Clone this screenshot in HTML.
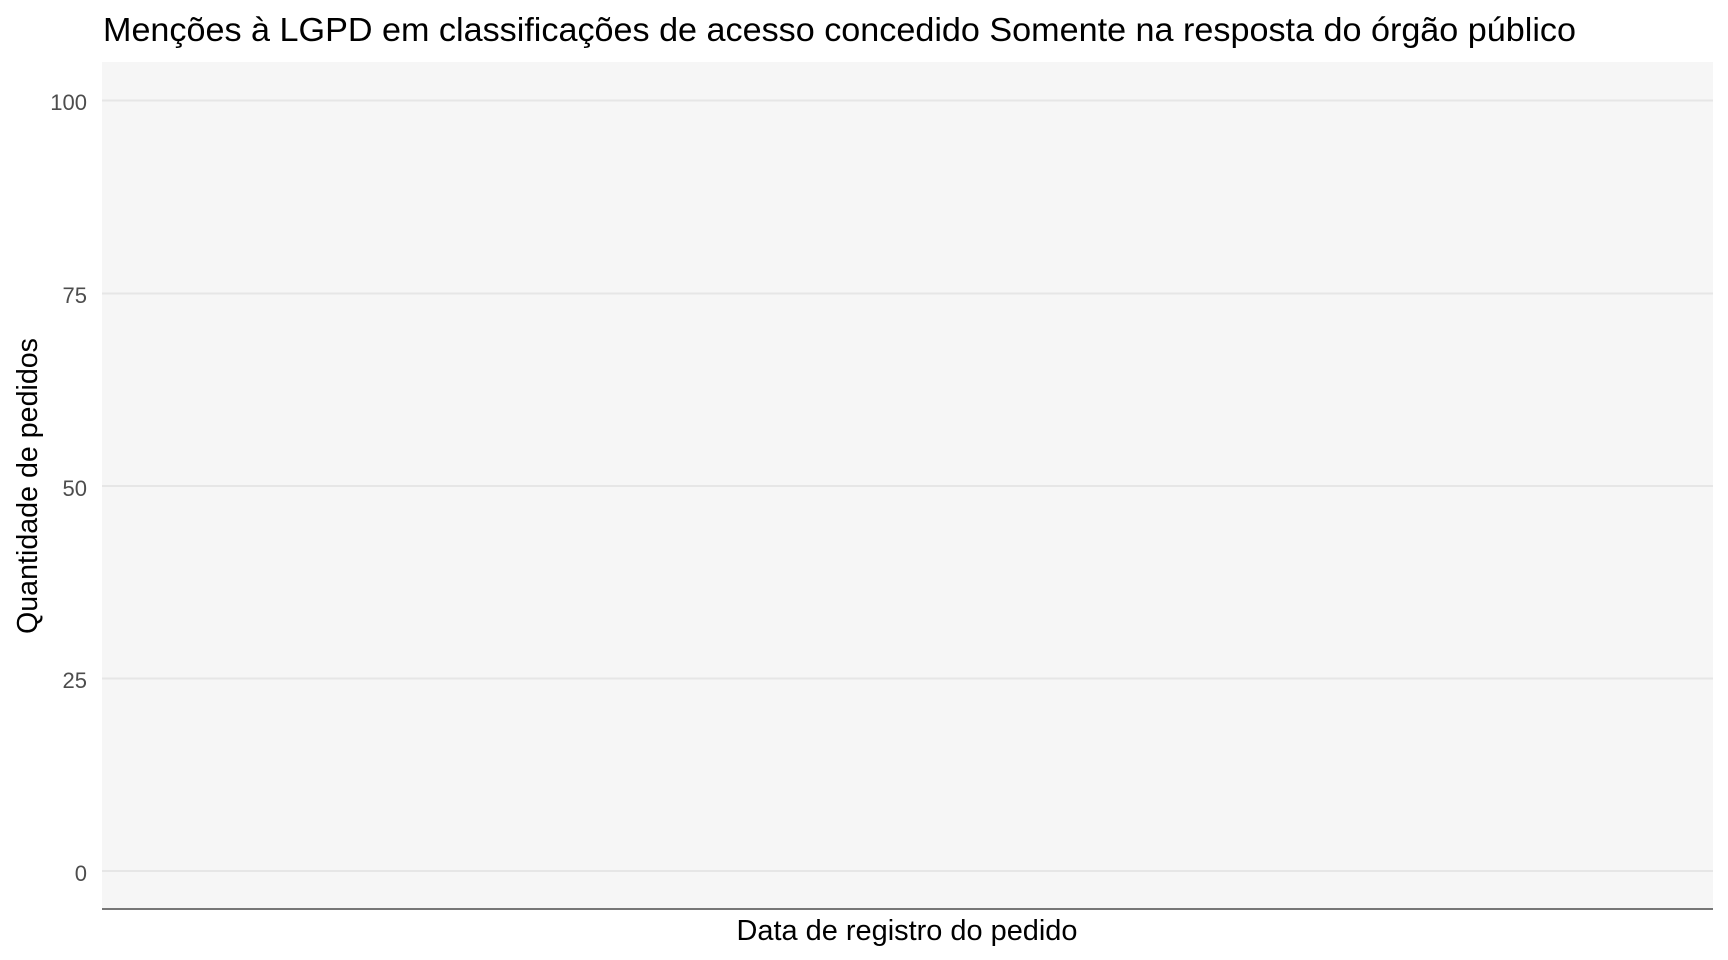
<!DOCTYPE html>
<html><head><meta charset="utf-8"><style>html,body{margin:0;padding:0;background:#fff}svg{display:block}</style></head>
<body>
<svg width="1728" height="960" xmlns="http://www.w3.org/2000/svg" font-family="Liberation Sans, Arial, sans-serif">
<rect x="0" y="0" width="1728" height="960" fill="#fff"/>
<rect x="102" y="62" width="1611" height="847" fill="#f6f6f6"/>
<g stroke="#e6e6e6" stroke-width="2">
<line x1="102" x2="1713" y1="100.5" y2="100.5"/>
<line x1="102" x2="1713" y1="293.5" y2="293.5"/>
<line x1="102" x2="1713" y1="486" y2="486"/>
<line x1="102" x2="1713" y1="678.5" y2="678.5"/>
<line x1="102" x2="1713" y1="871" y2="871"/>
</g>
<line x1="102" x2="1713" y1="909" y2="909" stroke="#777" stroke-width="2"/>
<g fill="#4d4d4d" font-size="22" text-anchor="end">
<text x="87" y="110">100</text>
<text x="87" y="303">75</text>
<text x="87" y="496">50</text>
<text x="87" y="688">25</text>
<text x="87" y="881">0</text>
</g>
<text x="103" y="41" font-size="33" fill="#000" textLength="1473" lengthAdjust="spacingAndGlyphs">Menções à LGPD em classificações de acesso concedido Somente na resposta do órgão público</text>
<text x="907" y="940" font-size="29" fill="#000" text-anchor="middle" textLength="341" lengthAdjust="spacingAndGlyphs">Data de registro do pedido</text>
<text transform="translate(37,486) rotate(-90)" font-size="29" fill="#000" text-anchor="middle" textLength="296" lengthAdjust="spacingAndGlyphs">Quantidade de pedidos</text>
</svg>
</body></html>
